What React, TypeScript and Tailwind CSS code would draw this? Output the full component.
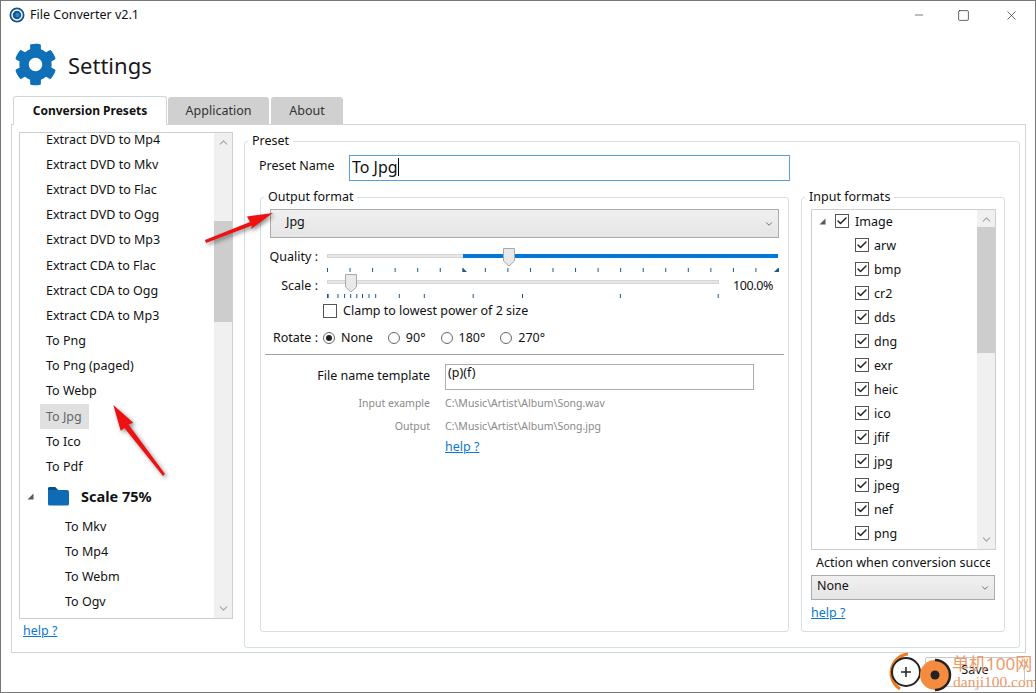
import React from 'react';
import { Check, ChevronDown, ChevronUp, Minus, Square, X } from 'lucide-react';
import { FaCog } from 'react-icons/fa';

const presets = [
  'Extract DVD to Mp4',
  'Extract DVD to Mkv',
  'Extract DVD to Flac',
  'Extract DVD to Ogg',
  'Extract DVD to Mp3',
  'Extract CDA to Flac',
  'Extract CDA to Ogg',
  'Extract CDA to Mp3',
  'To Png',
  'To Png (paged)',
  'To Webp',
  'To Jpg',
  'To Ico',
  'To Pdf',
];
const scalePresets = ['To Mkv', 'To Mp4', 'To Webm', 'To Ogv'];
const imageFormats = ['arw', 'bmp', 'cr2', 'dds', 'dng', 'exr', 'heic', 'ico', 'jfif', 'jpg', 'jpeg', 'nef', 'png'];
const scaleTicks = [0.5, 1.2, 11, 17.6, 23.7, 29.8, 35.5, 42, 48.7, 72.3, 97.3, 146.2, 195.5, 293.4, 391.2];
const qualityTicks = Array.from({ length: 21 }, (_, i) => 0.5 + i * 22.55);

const Triangle = () => (
  <svg width="7" height="7" viewBox="0 0 7 7" className="shrink-0">
    <polygon points="6.5,0.5 6.5,6.5 0.5,6.5" fill="#595959" />
  </svg>
);

const Help = ({ className = '' }: { className?: string }) => (
  <a className={`block text-[12.5px] leading-[18px] text-[#0b78d0] underline ${className}`}>help ?</a>
);

const CheckBox = ({ checked = false }: { checked?: boolean }) => (
  <span className="flex h-[14px] w-[14px] shrink-0 items-center justify-center border border-[#555555] bg-white">
    {checked && <Check size={12} strokeWidth={3} className="text-[#222222]" />}
  </span>
);

const Radio = ({ label, checked = false, className = '' }: { label: string; checked?: boolean; className?: string }) => (
  <span className={`flex items-center gap-[6px] ${className}`}>
    <span className="flex h-[12px] w-[12px] items-center justify-center rounded-full border border-[#666666] bg-white">
      {checked && <span className="h-[6px] w-[6px] rounded-full bg-[#222222]" />}
    </span>
    {label}
  </span>
);

const Scrollbar = ({ thumbTop, thumbHeight }: { thumbTop: number; thumbHeight: number }) => (
  <div className="relative flex h-full w-[18px] shrink-0 flex-col items-center justify-between bg-[#f0f0f0] py-[3px] text-[#a3a3a3]">
    <ChevronUp size={13} />
    <div className="absolute left-0 w-full bg-[#cdcdcd]" style={{ top: thumbTop, height: thumbHeight }} />
    <ChevronDown size={13} />
  </div>
);

const Thumb = ({ left }: { left: number }) => (
  <svg width="12" height="19" viewBox="0 0 12 19" className="absolute top-0" style={{ left }}>
    <polygon points="0.5,0.5 11.5,0.5 11.5,13 6,18 0.5,13" fill="#e9e9e9" stroke="#a8a8a8" />
  </svg>
);

const Slider = ({ width, thumb, ticks, from }: { width: number; thumb: number; ticks: number[]; from?: number }) => (
  <div className="relative h-[26px]" style={{ width }}>
    <div className="absolute left-0 right-0 top-[6px] h-[4px] border border-[#d6d6d6] bg-[#e7e7e7]" />
    {from !== undefined && (
      <div className="absolute right-0 top-[6px] h-[4px] bg-[#0078d7]" style={{ left: from }} />
    )}
    <Thumb left={thumb} />
    <svg width={width + 2} height="5" className="absolute left-0 top-[20px]">
      {ticks.map(x => (
        <line key={x} x1={x} x2={x} y1="0" y2="4" stroke="#1f5a86" />
      ))}
      {from !== undefined && (
        <>
          <polygon points={`${from},0 ${from},4 ${from + 4},4`} fill="#1f5a86" />
          <polygon points={`${width},0 ${width},4 ${width - 4},4`} fill="#1f5a86" />
        </>
      )}
    </svg>
  </div>
);

const Select = ({ value, className = '' }: { value: string; className?: string }) => (
  <div className={`flex items-center justify-between border border-[#acacac] bg-linear-to-b from-[#f0f0f0] to-[#e5e5e5] pr-[4px] ${className}`}>
    <span className="-mt-[3px]">{value}</span>
    <ChevronDown size={10} className="text-[#555555]" />
  </div>
);

const Group = ({ title, className = '', children }: { title: string; className?: string; children: React.ReactNode }) => (
  <fieldset className={`rounded-[3px] border border-[#d5dfe5] ${className}`}>
    <legend className="ml-[3px] px-[4px] text-[12.5px] leading-[18px]">{title}</legend>
    {children}
  </fieldset>
);

const App = () => {
  return (
    <div className="relative flex h-[693px] w-[1036px] flex-col overflow-hidden border border-[#777777] bg-white font-['Noto_Sans','Noto_Sans_CJK_SC',sans-serif] text-[12.5px] leading-[18px] text-[#111111]">
      {/* title bar */}
      <div className="flex h-[30px] shrink-0 items-center pb-[2px] pl-[8px]">
        <svg width="16" height="16" viewBox="0 0 16 16">
          <circle cx="8" cy="8" r="7.5" fill="#11568f" />
          <circle cx="8" cy="8" r="5" fill="none" stroke="#ffffff" strokeWidth="1.4" />
          <circle cx="8.500" cy="8" r="2.200" fill="#2f86c5" />
        </svg>
        <span className="ml-[5px]">File Converter v2.1</span>
        <div className="ml-auto flex items-center text-[#111111]">
          <Minus size={14} strokeWidth={1} className="mr-[31px] scale-x-[0.9]" />
          <Square size={13} strokeWidth={1.2} className="mr-[34px]" />
          <X size={15} strokeWidth={1} className="mr-[16px]" />
        </div>
      </div>

      {/* header */}
      <div className="flex h-[65px] shrink-0 items-center pb-[2px] pl-[13px] pt-[3px]">
        <FaCog size={43} className="text-[#0f70b7]" />
        <span className="ml-[11px] mt-[2px] text-[22px] leading-[30px] text-[#1a1a1a]">Settings</span>
      </div>

      {/* tabs */}
      <div className="flex h-[28px] shrink-0 items-end pl-[12px]">
        <div className="relative z-10 -mb-px flex h-[29px] w-[154px] items-center justify-center rounded-t-[3px] border border-b-0 border-[#d0d5d8] bg-white text-[12px] font-bold">
          Conversion Presets
        </div>
        <div className="ml-px flex h-[27px] w-[101px] items-center justify-center rounded-t-[3px] bg-[#d0d0d0] text-[#333333]">Application</div>
        <div className="ml-[2px] flex h-[27px] w-[72px] items-center justify-center rounded-t-[3px] bg-[#d0d0d0] text-[#333333]">About</div>
      </div>

      {/* panel */}
      <div className="ml-[10px] flex h-[529px] w-[1015px] shrink-0 border border-[#d0d5d8] pl-[7px] pt-[7px]">
        <div className="w-[214px] shrink-0">
          <div className="flex h-[487px] overflow-hidden border border-[#cfcfcf]">
            <div className="min-w-0 flex-1 overflow-hidden">
              <div className="-mt-[6px]">
                {presets.map(p => (
                  <div key={p} className="flex h-[25.2px] items-center pl-[20px]">
                    <span className={p === 'To Jpg' ? 'flex h-[25px] w-[49px] items-center bg-[#e0e0e0] pl-[6px] text-[#666666]' : 'pl-[6px]'}>{p}</span>
                  </div>
                ))}
                <div className="flex h-[35px] items-center pb-[2px] pl-[7px]">
                  <Triangle />
                  <svg width="23" height="20" viewBox="0 0 23 20" className="ml-[13px]">
                    <path d="M1 3a2 2 0 0 1 2-2h5l3 3h9a2 2 0 0 1 2 2v12a1.500 1.500 0 0 1-1.500 1.500H2.500A1.500 1.500 0 0 1 1 18z" fill="#0f6cb4" />
                    <path d="M1 3a2 2 0 0 1 2-2h5l3 3H1z" fill="#0b4f86" />
                  </svg>
                  <span className="ml-[11px] text-[14.5px] font-bold">Scale 75%</span>
                </div>
                {scalePresets.map(p => (
                  <div key={p} className="flex h-[25px] items-center pl-[45px]">{p}</div>
                ))}
              </div>
            </div>
            <Scrollbar thumbTop={88} thumbHeight={101} />
          </div>
          <Help className="ml-[4px] mt-[3px]" />
        </div>

        <Group title="Preset" className="ml-[11px] h-[516px] w-[776px]">
          <div className="ml-[14px] mt-[5px] flex h-[26px] items-center">
            <span className="-mt-[4px] w-[90px]">Preset Name</span>
            <div className="flex h-[26px] w-[441px] items-center border border-[#569de5] pb-[2px] pl-[2px] text-[16px]">
              To Jpg
              <span className="h-[18px] w-px bg-black" />
            </div>
          </div>

          <div className="ml-[15px] mt-[7px] flex gap-[12px]">
            <Group title="Output format" className="h-[444px] w-[529px]">
              <Select value="Jpg" className="ml-[9px] mt-[3px] h-[29px] w-[509px] pl-[15px]" />
              <div className="mt-[10px] flex h-[26px] items-start">
                <span className="w-[57px] text-right">Quality :</span>
                <div className="ml-[9px]">
                  <Slider width={451} thumb={176} ticks={qualityTicks} from={136} />
                </div>
              </div>
              <div className="flex h-[26px] items-start">
                <span className="mt-[3px] w-[57px] text-right">Scale :</span>
                <div className="ml-[9px]">
                  <Slider width={392} thumb={18} ticks={scaleTicks} />
                </div>
                <span className="ml-[14px] mt-[3px] tracking-[-0.4px]">100.0%</span>
              </div>
              <div className="ml-[62px] mt-[4px] flex h-[14px] items-center gap-[6px]">
                <CheckBox />
                Clamp to lowest power of 2 size
              </div>
              <div className="mt-[11px] flex h-[18px] items-center">
                <span className="w-[57px] text-right">Rotate :</span>
                <Radio label="None" checked className="ml-[5px]" />
                <Radio label="90°" className="ml-[15px]" />
                <Radio label="180°" className="ml-[15px]" />
                <Radio label="270°" className="ml-[15px]" />
              </div>
              <div className="ml-[4px] mt-[7px] w-[519px] border-t border-[#a0a0a0]" />
              <div className="mt-[9px] flex h-[26px] items-center">
                <span className="-mt-[3px] w-[169px] text-right">File name template</span>
                <div className="ml-[15px] h-[26px] w-[309px] border border-[#acacac] pl-[2px] leading-[16px]">(p)(f)</div>
              </div>
              <div className="mt-[4px] flex h-[18px] items-center text-[10.5px] text-[#8a8a8a]">
                <span className="w-[169px] text-right">Input example</span>
                <span className="ml-[15px]">C:\Music\Artist\Album\Song.wav</span>
              </div>
              <div className="mt-[5px] flex h-[18px] items-center text-[10.5px] text-[#8a8a8a]">
                <span className="w-[169px] text-right">Output</span>
                <span className="ml-[15px]">C:\Music\Artist\Album\Song.jpg</span>
              </div>
              <Help className="ml-[184px] mt-[3px]" />
            </Group>

            <Group title="Input formats" className="h-[444px] w-[204px]">
              <div className="ml-[9px] mt-[3px] flex h-[341px] w-[185px] overflow-hidden border border-[#cfcfcf]">
                <div className="-mt-px min-w-0 flex-1">
                  <div className="flex h-[24px] items-center gap-[6px] pl-[7px]">
                    <Triangle />
                    <span className="ml-[3px]"><CheckBox checked /></span>
                    <span className="mt-px">Image</span>
                  </div>
                  {imageFormats.map(f => (
                    <div key={f} className="flex h-[24px] items-center gap-[5px] pl-[43px]">
                      <CheckBox checked />
                      <span className="mt-px">{f}</span>
                    </div>
                  ))}
                </div>
                <Scrollbar thumbTop={17} thumbHeight={126} />
              </div>
              <div className="ml-[14px] mt-[4px] w-[174px] overflow-hidden whitespace-nowrap">Action when conversion succeeds</div>
              <Select value="None" className="ml-[9px] mt-[3px] h-[25px] w-[184px] pl-[5px]" />
              <Help className="ml-[9px] mt-[4px]" />
            </Group>
          </div>
        </Group>
      </div>

      {/* save button, mostly under the watermark */}
      <div className="ml-[924px] mt-[4px] flex h-[30px] w-[100px] shrink-0 items-center justify-center rounded-[2px] border border-[#c8c8c8] pb-[4px]">Save</div>

      {/* annotations on top of the screenshot */}
      <svg width="1036" height="693" className="pointer-events-none absolute -left-px -top-px drop-shadow-[2px_2px_2px_rgba(0,0,0,0.45)]">
        <polygon points="273,213 247,216.500 250,222 205,240 206,243 252,225.500 251,229" fill="#ee1111" />
        <polygon points="113.300,405 133.300,422.700 128.500,424.500 165,474 163,476 124.500,428 120.700,430.700" fill="#ee1111" />
      </svg>
      <svg width="72" height="42" viewBox="0 0 72 42" className="absolute -top-px left-[887px] mt-[651px]">
        <path d="M20 3A19 19 0 0 0 12 38" fill="none" stroke="#ee7b22" strokeWidth="3" />
        <circle cx="18" cy="21" r="14" fill="#ffffff" stroke="#222222" strokeWidth="2" />
        <path d="M13 21h10M18 16v10" stroke="#222222" strokeWidth="1.500" />
        <circle cx="47" cy="24" r="15" fill="#f58b3f" />
        <path d="M47 9a15 15 0 0 1 0 30" fill="none" stroke="#222222" strokeWidth="2.500" />
        <circle cx="47" cy="24" r="4.500" fill="#222222" />
      </svg>
      <div className="absolute left-[951px] top-[651px] whitespace-nowrap text-[17px] leading-[24px] text-[#eb9a68]">单机100网</div>
      <div className="absolute left-[952px] top-[672px] whitespace-nowrap font-['Liberation_Serif'] text-[15.5px] leading-[18px] text-[#eb9a68]">danji100.com</div>
    </div>
  );
};

export default App;
